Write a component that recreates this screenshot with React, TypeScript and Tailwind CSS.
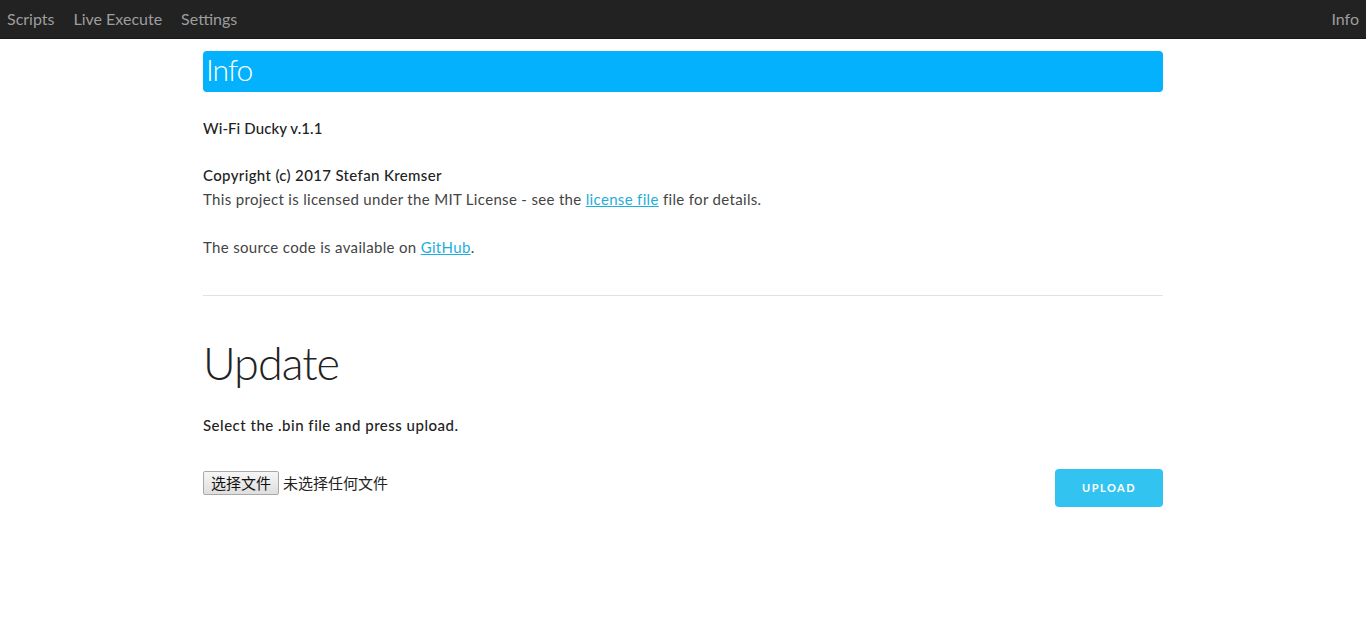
import React from "react";

const font = { fontFamily: "Lato, 'Noto Sans CJK SC', sans-serif" };

function Nav() {
  return (
    <nav className="flex h-[39px] items-center justify-between border-b border-[#1a1a1a] bg-[#222] px-[7px] text-[16px] text-[#9d9d9d]">
      <div className="flex items-center gap-[19px]">
        <a>Scripts</a>
        <a>Live Execute</a>
        <a>Settings</a>
      </div>
      <a>Info</a>
    </nav>
  );
}

export default function App() {
  return (
    <div className="min-h-screen bg-white text-[15px] leading-[24px] text-[#222]" style={font}>
      <Nav />
      <main className="mx-auto w-[960px] pt-[12px]">
        <h1 className="h-[41px] rounded-[4px] bg-[#03b1fc] px-[3px] text-[30px] font-light leading-[37px] tracking-[-1px] text-white">
          Info
        </h1>

        <div className="mt-[24px]">
          <p className="font-medium tracking-[0.1px]">Wi-Fi Ducky v.1.1</p>
          <p className="mt-[23px] font-medium tracking-[0.35px]">Copyright (c) 2017 Stefan Kremser</p>
          <p className="tracking-[0.33px] text-[#444]">
            This project is licensed under the MIT License - see the{" "}
            <a className="text-[#1eaedb] underline">license file</a> file for details.
          </p>
          <p className="mt-[24px] tracking-[0.33px] text-[#444]">
            The source code is available on <a className="text-[#1eaedb] underline">GitHub</a>.
          </p>
        </div>

        <hr className="mt-[36px] border-t border-[#e1e1e1]" />

        <h2 className="mt-[40px] text-[45px] font-light leading-[54px] tracking-[-1px]">Update</h2>

        <p className="mt-[23px] font-medium tracking-[0.5px]">Select the .bin file and press upload.</p>

        <div className="mt-[32px] flex items-start justify-between">
          <div className="mt-[2px] flex items-center gap-[4px] text-[15px]" style={{ fontFamily: "'Noto Sans CJK SC', sans-serif" }}>
            <button className="h-[24px] rounded-[2px] border border-[#a9a9a9] bg-gradient-to-b from-[#f6f6f6] to-[#dedede] px-[7px] text-[15px] leading-[20px] text-[#111]">
              选择文件
            </button>
            <span className="text-[#222]">未选择任何文件</span>
          </div>
          <button className="h-[38px] w-[108px] rounded-[4px] bg-[#33c3f0] text-[11px] font-bold uppercase tracking-[1.5px] text-white">
            Upload
          </button>
        </div>
      </main>
    </div>
  );
}
